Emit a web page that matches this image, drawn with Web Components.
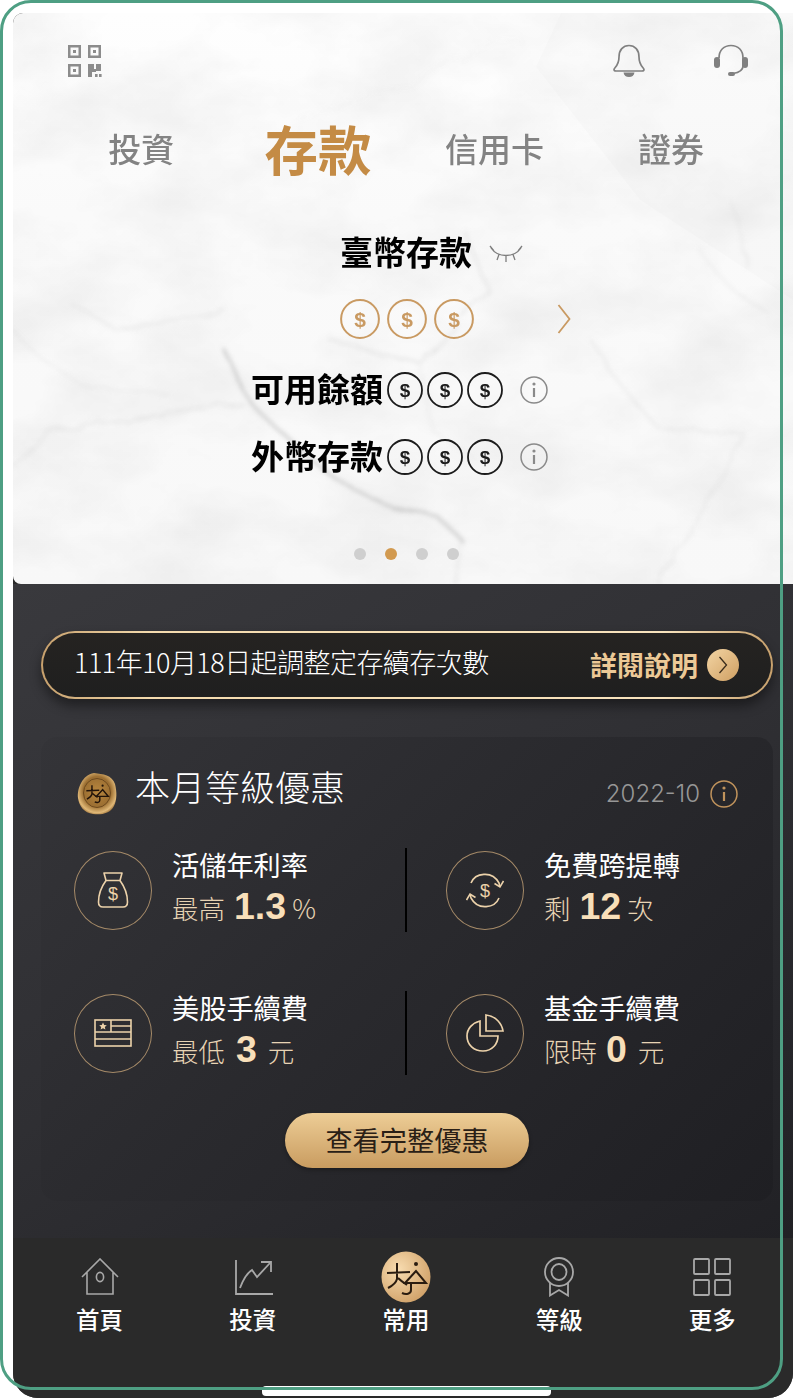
<!DOCTYPE html>
<html lang="zh-Hant">
<head>
<meta charset="utf-8">
<title>存款</title>
<style>
	html, body {
		margin: 0;
		background: #fff;
		font-family: "Noto Sans CJK TC", "Liberation Sans", sans-serif;
	}
</style>
</head>
<body>
<phone-app>
	<hero-panel></hero-panel>
	<perk-section></perk-section>
	<nav-bar></nav-bar>
</phone-app>
<green-frame></green-frame>

<script>
const LOGO_STROKES = `
	<path d="M-19 -4 L4 -5 M-9 -14 V2 C-10 6 -14 9 -18 11 M-8 1 C-5 4 -2 6 1 8" />
	<circle cx="10" cy="-13" r="2" stroke="none" fill="currentColor" />
	<path d="M10 -6 L-1 6 H20 Z M5 6 V13 C5 17 0 18 -4 16" />`;

class GreenFrame extends HTMLElement {
	constructor() {
		super();
		this.attachShadow({ mode: 'open' });
		this.shadowRoot.innerHTML = `
		<style>
			:host {
				position: absolute;
				left: 0;
				top: 0;
				width: 783px;
				height: 1390px;
				box-sizing: border-box;
				border: 3px solid #4e9f83;
				border-radius: 31px;
				pointer-events: none;
				z-index: 5;
			}
		</style>`;
	}
}

class PhoneApp extends HTMLElement {
	constructor() {
		super();
		this.attachShadow({ mode: 'open' });
		this.shadowRoot.innerHTML = `
		<style>
			:host {
				display: flex;
				flex-direction: column;
				position: relative;
				box-sizing: border-box;
				width: 780px;
				height: 1385px;
				margin: 13px 0 0 13px;
				overflow: hidden;
				border-radius: 10px 0 25px 25px;
				background: #2a2a2a;
			}
			#home-bar {
				position: absolute;
				left: 249px;
				top: 1373px;
				width: 289px;
				height: 10px;
				border-radius: 4px;
				background: #fff;
			}
		</style>
		<slot></slot>
		<div id="home-bar"></div>`;
	}
}

class MarbleBg extends HTMLElement {
	constructor() {
		super();
		this.attachShadow({ mode: 'open' });
		this.shadowRoot.innerHTML = `
		<style>
			:host {
				position: absolute;
				inset: 0;
				background: linear-gradient(180deg, #fefefe, #fafafa 35%, #f8f8f8);
			}
			svg { display: block; }
		</style>
		<svg width="780" height="571" viewBox="13 13 780 571">
			<defs>
				<filter id="cloud" x="0" y="0" width="100%" height="100%">
					<feTurbulence type="fractalNoise" baseFrequency="0.009 0.014" numOctaves="5" seed="11" />
					<feColorMatrix values="0 0 0 0 0  0 0 0 0 0  0 0 0 0 0  0.09 0 0 0 -0.032" />
				</filter>
				<filter id="vein" x="-10%" y="-10%" width="120%" height="120%">
					<feTurbulence type="fractalNoise" baseFrequency="0.03" numOctaves="4" seed="4" result="n" />
					<feDisplacementMap in="SourceGraphic" in2="n" scale="14" />
					<feGaussianBlur stdDeviation="2.1" />
				</filter>
			</defs>
			<rect x="13" y="13" width="780" height="571" filter="url(#cloud)" />
			<path d="M561 13 L793 13 L793 300 L640 200 L536 67 L475 197 Z" fill="#000" opacity="0.01" />
			<g filter="url(#vein)" fill="none" stroke="#c4c4c4" stroke-width="2">
				<path d="M222 347 C232 362 238 378 248 400 C262 416 272 424 283 433 C300 450 316 464 334 477 C352 490 368 496 384 503 C404 510 424 514 440 520 C450 528 458 536 465 543" stroke-width="3" stroke="#b8b8b8" opacity=".6" />
				<path d="M10 463 C28 448 44 438 60 430 C90 424 120 420 150 417 C182 412 214 408 243 403" opacity=".3" />
				<path d="M465 230 C470 248 478 268 485 287 C468 312 440 340 420 363 C390 356 358 348 329 340" opacity=".38" />
				<path d="M70 303 C86 312 100 322 116 330 C150 328 190 318 228 313" opacity=".24" />
				<path d="M590 340 C600 352 606 360 607 367 C622 388 640 408 657 427 C690 430 718 432 743 433 C732 456 720 478 708 500 C690 528 672 556 657 584" opacity=".26" />
				<path d="M455 584 C456 560 458 548 460 540" opacity=".3" />
				<path d="M420 363 C424 384 428 404 432 430 M432 430 C446 440 462 450 478 462" opacity=".16" />
				<path d="M13 330 C30 350 52 368 80 384 C110 392 140 388 170 395" opacity=".16" />
				<path d="M700 250 C720 280 740 300 768 312 M730 200 C742 226 750 250 748 272" opacity=".2" />
				<path d="M420 80 C440 60 480 44 520 40 M300 120 C340 104 382 92 420 80" opacity=".08" />
			</g>
		</svg>`;
	}
}

class MaskCoin extends HTMLElement {
	constructor() {
		super();
		this.attachShadow({ mode: 'open' });
		const size = this.getAttribute('size') || 36;
		const tone = this.getAttribute('tone') === 'gold' ? '#c99a62' : '#1c1c1c';
		this.shadowRoot.innerHTML = `
		<style>
			:host { display: block; width: ${size}px; height: ${size}px; }
			svg { display: block; }
			text {
				font-family: "Liberation Sans", sans-serif;
				font-weight: 700;
				font-size: 21px;
				text-anchor: middle;
			}
		</style>
		<svg width="${size}" height="${size}" viewBox="0 0 40 40">
			<circle cx="20" cy="20" r="18.9" fill="none" stroke="${tone}" stroke-width="2" />
			<text x="20" y="27.5" fill="${tone}">$</text>
		</svg>`;
	}
}

class InfoMark extends HTMLElement {
	constructor() {
		super();
		this.attachShadow({ mode: 'open' });
		const tone = this.getAttribute('tone') || '#8a8a8a';
		this.shadowRoot.innerHTML = `
		<style>
			:host { display: block; width: 28px; height: 28px; }
			svg { display: block; }
		</style>
		<svg width="28" height="28" viewBox="0 0 28 28" fill="none" stroke="${tone}" stroke-width="1.5">
			<circle cx="14" cy="14" r="13" />
			<circle cx="14" cy="8" r="1.6" fill="${tone}" stroke="none" />
			<path d="M14 12 V21" stroke-width="2.2" />
		</svg>`;
	}
}

class HeroPanel extends HTMLElement {
	constructor() {
		super();
		this.attachShadow({ mode: 'open' });
		this.shadowRoot.innerHTML = `
		<style>
			:host {
				display: flex;
				flex-direction: column;
				position: relative;
				flex: none;
				box-sizing: border-box;
				height: 571px;
				padding-top: 31px;
				border-radius: 0 0 0 8px;
				overflow: hidden;
				color: #000;
			}
			.layer { position: relative; }
			#tools {
				display: flex;
				align-items: flex-start;
				height: 34px;
				padding: 0 44px 0 54px;
			}
			#tools svg { display: block; }
			#bell { margin-left: auto; }
			#headset { margin-left: 67px; }
			#tabs {
				display: grid;
				grid-template-columns: repeat(4, 176.6px);
				height: 60px;
				margin-top: 40px;
				padding-left: 40px;
				align-items: center;
				justify-items: center;
				color: #838383;
				font-size: 33px;
				font-weight: 500;
				line-height: 60px;
			}
			#tabs b {
				color: #c48b45;
				font-size: 53.5px;
				font-weight: 700;
			}
			.center-row {
				display: grid;
				grid-template-columns: 1fr auto 1fr;
				align-items: center;
				height: 40px;
				padding-left: 6px;
			}
			#title-row { margin-top: 56px; }
			#gold-row { margin-top: 25px; padding-left: 7px; }
			.strong {
				font-size: 33px;
				font-weight: 700;
				line-height: 36px;
				padding-bottom: 4px;
				white-space: nowrap;
			}
			#title-row .strong {
				line-height: 34px;
				padding-bottom: 6px;
			}
			#eye { margin: 1px 0 0 17px; display: block; }
			#chevron { margin-left: 83px; display: block; }
			.coins {
				display: flex;
				gap: 7px;
			}
			.balance {
				display: flex;
				align-items: center;
				justify-content: center;
				height: 40px;
				padding-right: 7px;
			}
			.balance .coins {
				gap: 4px;
				margin-left: 4px;
			}
			.balance info-mark { margin-left: 17px; }
			#avail { margin-top: 31px; }
			#foreign { margin-top: 27px; }
			#dots {
				display: flex;
				justify-content: center;
				gap: 19px;
				margin-top: 71px;
				padding-left: 6px;
			}
			#dots i {
				width: 12px;
				height: 12px;
				border-radius: 50%;
				background: #cfcfcf;
			}
			#dots i.on { background: #d29a50; }
		</style>
		<marble-bg></marble-bg>
		<div class="layer" id="tools">
			<svg width="36" height="34" viewBox="0 0 36 34" fill="#8c8c8c">
				<path fill-rule="evenodd" d="M1 1 H14 V14 H1 Z M3.5 3.5 V11.5 H11.5 V3.5 Z M21 1 H34 V14 H21 Z M23.5 3.5 V11.5 H31.5 V3.5 Z M1 20 H14 V33 H1 Z M3.5 22.5 V30.5 H11.5 V22.5 Z" />
				<rect x="6" y="6" width="3" height="3" /><rect x="26" y="6" width="3" height="3" /><rect x="6" y="25" width="3" height="3" />
				<path d="M21 20 H27 V25 H29 V20 H34 V27 H29 V28 H25 V33 H21 Z" />
				<rect x="28" y="30" width="2.6" height="3" /><rect x="32" y="30" width="2.6" height="3" />
			</svg>
			<svg id="bell" width="34" height="34" viewBox="0 0 34 34" fill="none" stroke="#808080" stroke-width="1.7">
				<path d="M2 25.5 C2 23.5 7 22 7 13 C7 6 11 1.5 17 1.5 C23 1.5 27 6 27 13 C27 22 32 23.5 32 25.5 C32 26.5 31 27 30 27 H4 C3 27 2 26.5 2 25.5 Z" />
				<path d="M11.5 28.5 H22.5 C22 31.5 20 33 17 33 C14 33 12 31.5 11.5 28.5 Z" fill="#808080" stroke="none" />
			</svg>
			<svg id="headset" width="36" height="34" viewBox="0 0 36 34" fill="none" stroke="#808080" stroke-width="1.7">
				<path d="M6 14 C6 6 11 1.5 18 1.5 C25 1.5 30 6 30 14 V22 C30 27 26 28.5 20 29.5" />
				<rect x="1" y="13" width="6" height="11" rx="3" fill="#808080" stroke="none" />
				<rect x="29" y="13" width="6" height="11" rx="3" fill="#808080" stroke="none" />
				<rect x="15" y="28" width="7" height="4" rx="2" fill="#808080" stroke="none" />
			</svg>
		</div>
		<div class="layer" id="tabs">
			<span>投資</span><b>存款</b><span>信用卡</span><span>證券</span>
		</div>
		<div class="layer center-row" id="title-row">
			<span></span>
			<span class="strong">臺幣存款</span>
			<svg id="eye" width="34" height="20" viewBox="0 0 34 20" fill="none" stroke="#7d7d7d" stroke-width="1.3">
				<path d="M2 3 C9 13 25 13 32 3 M1 1 L5 6 M33 1 L29 6 M10 9.5 L8 15 M24 9.5 L26 15 M17 11 V17" />
			</svg>
		</div>
		<div class="layer center-row" id="gold-row">
			<span></span>
			<div class="coins">
				<mask-coin tone="gold" size="40"></mask-coin>
				<mask-coin tone="gold" size="40"></mask-coin>
				<mask-coin tone="gold" size="40"></mask-coin>
			</div>
			<svg id="chevron" width="14" height="30" viewBox="0 0 14 30" fill="none" stroke="#c99a62" stroke-width="1.8">
				<path d="M1.5 1 L12.5 15 L1.5 29" />
			</svg>
		</div>
		<div class="layer balance" id="avail">
			<span class="strong">可用餘額</span>
			<div class="coins">
				<mask-coin size="36"></mask-coin>
				<mask-coin size="36"></mask-coin>
				<mask-coin size="36"></mask-coin>
			</div>
			<info-mark></info-mark>
		</div>
		<div class="layer balance" id="foreign">
			<span class="strong">外幣存款</span>
			<div class="coins">
				<mask-coin size="36"></mask-coin>
				<mask-coin size="36"></mask-coin>
				<mask-coin size="36"></mask-coin>
			</div>
			<info-mark></info-mark>
		</div>
		<div class="layer" id="dots">
			<i></i><i class="on"></i><i></i><i></i>
		</div>`;
	}
}

class NoticeBanner extends HTMLElement {
	constructor() {
		super();
		this.attachShadow({ mode: 'open' });
		this.shadowRoot.innerHTML = `
		<style>
			:host {
				display: flex;
				align-items: center;
				box-sizing: border-box;
				width: 732px;
				height: 68px;
				padding: 0 32px 0 32px;
				border: 2px solid transparent;
				border-radius: 34px;
				background:
					linear-gradient(180deg, #252321, #1f1f1f) padding-box,
					linear-gradient(90deg, #c7a06c, #f4dbae 15%, #f8e3bd 85%, #c7a06c) border-box;
				box-shadow: 0 7px 12px rgba(0, 0, 0, .42);
				color: #fff;
			}
			#msg {
				padding-bottom: 7px;
				font-size: 27px;
				font-weight: 300;
				line-height: 36px;
				letter-spacing: -0.55px;
				white-space: nowrap;
				margin-left: -1px;
			}
			#more {
				margin-left: auto;
				color: #ecc996;
				font-size: 27px;
				font-weight: 700;
				line-height: 40px;
			}
			svg { display: block; margin-left: 9px; }
		</style>
		<span id="msg">111年10月18日起調整定存續存次數</span>
		<span id="more">詳閱說明</span>
		<svg width="32" height="32" viewBox="0 0 32 32">
			<defs>
				<linearGradient id="disc" x1="0" y1="0" x2="1" y2="1">
					<stop offset="0" stop-color="#f3d5a4" /><stop offset="1" stop-color="#cf9f62" />
				</linearGradient>
			</defs>
			<circle cx="16" cy="16" r="16" fill="url(#disc)" />
			<path d="M12.5 8 L19.5 16 L12.5 24" fill="none" stroke="#3a2c1c" stroke-width="1.3" />
		</svg>`;
	}
}

class PerkItem extends HTMLElement {
	constructor() {
		super();
		this.attachShadow({ mode: 'open' });
		this.shadowRoot.innerHTML = `
		<style>
			:host {
				display: flex;
				align-items: center;
				height: 84px;
			}
			:host([divided]) {
				border-left: 2px solid #000;
				padding-left: 39px;
				margin-left: -1px;
			}
			#ring {
				flex: none;
				box-sizing: border-box;
				width: 78px;
				height: 79px;
				border: 1px solid #a58a68;
				border-radius: 50%;
				display: flex;
				align-items: center;
				justify-content: center;
			}
			#copy { margin-left: 20px; margin-top: -1px; }
			#title {
				color: #fff;
				font-size: 27.2px;
				font-weight: 400;
				line-height: 34px;
				white-space: nowrap;
			}
			#value {
				display: flex;
				align-items: baseline;
				gap: 7px;
				color: #e8d4b4;
				font-size: 26.5px;
				font-weight: 300;
				line-height: 50px;
				white-space: nowrap;
			}
		</style>
		<div id="ring"><slot name="icon"></slot></div>
		<div id="copy">
			<div id="title"><slot name="title"></slot></div>
			<div id="value"><slot name="pre"></slot><slot name="num"></slot><slot name="unit"></slot></div>
		</div>`;
	}
}

class PerkCard extends HTMLElement {
	constructor() {
		super();
		this.attachShadow({ mode: 'open' });
		this.shadowRoot.innerHTML = `
		<style>
			:host {
				display: block;
				box-sizing: border-box;
				width: 732px;
				height: 464px;
				margin-top: 38px;
				padding: 36px 0 33px 33px;
				border-radius: 16px;
				background: linear-gradient(135deg, #343438, #2a2a2e 45%, #1f1f23);
			}
			#head {
				display: flex;
				align-items: center;
				height: 42px;
				padding: 0 35px 0 3px;
			}
			#head svg { display: block; }
			#head h2 {
				margin: -17px 0 0 18px;
				color: #fff;
				font-size: 35px;
				font-weight: 300;
				line-height: 44px;
			}
			#date {
				margin-left: auto;
				color: #979797;
				font-family: Inter, "Liberation Sans", sans-serif;
				font-size: 24px;
				font-weight: 300;
				line-height: 30px;
			}
			info-mark { margin: 0 0 0 10px; }
			#grid {
				display: grid;
				grid-template-columns: 332px 1fr;
				row-gap: 59px;
				margin-top: 33px;
			}
			#cta {
				display: block;
				box-sizing: border-box;
				width: 244px;
				height: 55px;
				margin: 38px 0 0 211px;
				padding: 0 0 4px;
				border: 0;
				border-radius: 28px;
				background: linear-gradient(180deg, #edcd96, #c99c60);
				box-shadow: 0 2px 4px rgba(0, 0, 0, .3);
				color: #2a2016;
				font: 400 27.2px/46px "Noto Sans CJK TC", sans-serif;
			}
		</style>
		<div id="head">
			<svg width="40" height="42" viewBox="-20 -21 40 42" color="#22140a">
				<defs>
					<radialGradient id="wax" cx="0.5" cy="0.45" r="0.6">
						<stop offset="0" stop-color="#b8873f" /><stop offset="0.6" stop-color="#9c6f32" /><stop offset="0.85" stop-color="#e0b877" /><stop offset="1" stop-color="#8a5f2a" />
					</radialGradient>
				</defs>
				<path d="M-3 -21 C6 -20 15 -19 18 -10 C20 -2 20 6 17 12 C13 20 4 21 -4 20 C-13 19 -18 12 -19 4 C-20 -5 -15 -19 -3 -21 Z" fill="url(#wax)" />
				<ellipse cx="0" cy="-1" rx="13.5" ry="14.5" fill="none" stroke="#6e4a1e" stroke-width="1" />
				<g transform="translate(0 -1) scale(.56)" fill="none" stroke="currentColor" stroke-width="2.6">${LOGO_STROKES}</g>
			</svg>
			<h2>本月等級優惠</h2>
			<span id="date">2022-10</span>
			<info-mark tone="#c0935c"></info-mark>
		</div>
		<div id="grid"><slot></slot></div>
		<button id="cta">查看完整優惠</button>`;
	}
}

class PerkSection extends HTMLElement {
	constructor() {
		super();
		this.attachShadow({ mode: 'open' });
		this.shadowRoot.innerHTML = `
		<style>
			:host {
				display: block;
				flex: none;
				box-sizing: border-box;
				height: 654px;
				padding: 47px 0 0 28px;
				background: linear-gradient(150deg, #39393d, #2f2f33 50%, #212125);
			}
			svg { display: block; }
			svg text {
				fill: #ecd2aa;
				font-family: "Liberation Sans", sans-serif;
				text-anchor: middle;
			}
			.num {
				margin: 0 -1px 0 2px;
				color: #f8dfb9;
				font-family: "Liberation Sans", sans-serif;
				font-size: 37.5px;
				font-weight: 700;
			}
			.single { margin-left: 4px; }
			.yuan { margin-left: 5px; }
		</style>
		<notice-banner></notice-banner>
		<perk-card>
			<perk-item>
				<svg slot="icon" width="32" height="36" viewBox="0 0 32 36" fill="none" stroke="#ecd2aa" stroke-width="1.6" stroke-linejoin="round">
					<path d="M7 1 H25 L23 8.5 H9 Z" />
					<path d="M9 8.5 C5 14 1.5 22 1.5 30 C1.5 33.5 3.5 35 6 35 H26 C28.5 35 30.5 33.5 30.5 30 C30.5 22 27 14 23 8.5" />
					<text x="16" y="28" font-size="18" stroke="none">$</text>
				</svg>
				<span slot="title">活儲年利率</span>
				<span slot="pre">最高</span>
				<span slot="num" class="num">1.3</span>
				<span slot="unit">%</span>
			</perk-item>
			<perk-item divided>
				<svg slot="icon" width="38" height="37" viewBox="0 0 38 37" fill="none" stroke="#ecd2aa" stroke-width="1.6">
					<path d="M5 11 C9 1 26 -2 33 11 L34 15" />
					<path d="M37.5 9 L34 15 L28.5 11.5" />
					<path d="M33 26 C29 36 12 39 5 26 L4 22" />
					<path d="M0.5 28 L4 22 L9.5 25.5" />
					<text x="19" y="25" font-size="18" stroke="none">$</text>
				</svg>
				<span slot="title">免費跨提轉</span>
				<span slot="pre">剩</span>
				<span slot="num" class="num">12</span>
				<span slot="unit">次</span>
			</perk-item>
			<perk-item>
				<svg slot="icon" width="38" height="28" viewBox="0 0 38 28" fill="none" stroke="#ecd2aa" stroke-width="1.6">
					<rect x="1" y="1" width="36" height="26" />
					<path d="M17 1 V13 M17 7 H37 M1 13 H37 M1 20 H37" />
					<path d="M9 3.5 L10.2 6 L12.8 6.3 L10.8 8 L11.4 10.6 L9 9.2 L6.6 10.6 L7.2 8 L5.2 6.3 L7.8 6 Z" fill="#ecd2aa" stroke="none" />
				</svg>
				<span slot="title">美股手續費</span>
				<span slot="pre">最低</span>
				<span slot="num" class="num single">3</span>
				<span slot="unit" class="yuan">元</span>
			</perk-item>
			<perk-item divided>
				<svg slot="icon" width="38" height="38" viewBox="0 0 38 38" fill="none" stroke="#ecd2aa" stroke-width="1.7">
					<path d="M20 1 C30 2 36 10 37 17 H20 Z" />
					<path d="M14 7 C6 9 1 15 1 22 C1 31 8 37 17 37 C26 37 32 30 32 22 H14 Z" />
				</svg>
				<span slot="title">基金手續費</span>
				<span slot="pre">限時</span>
				<span slot="num" class="num">0</span>
				<span slot="unit" class="yuan">元</span>
			</perk-item>
		</perk-card>`;
	}
}

class NavItem extends HTMLElement {
	constructor() {
		super();
		this.attachShadow({ mode: 'open' });
		this.shadowRoot.innerHTML = `
		<style>
			:host {
				display: flex;
				flex-direction: column;
				align-items: center;
			}
			#icon {
				display: flex;
				align-items: center;
				justify-content: center;
				height: 42px;
			}
			#label {
				margin-top: 6px;
				color: #fff;
				font-size: 23.5px;
				font-weight: 500;
				line-height: 30px;
			}
		</style>
		<div id="icon"><slot name="icon"></slot></div>
		<div id="label"><slot></slot></div>`;
	}
}

class NavBar extends HTMLElement {
	constructor() {
		super();
		this.attachShadow({ mode: 'open' });
		this.shadowRoot.innerHTML = `
		<style>
			:host {
				display: grid;
				grid-template-columns: repeat(5, 153.2px);
				flex: 1;
				box-sizing: border-box;
				align-items: start;
				padding: 18px 0 0 10px;
				background: #2a2a2a;
			}
			svg { display: block; }
		</style>
		<nav-item>
			<svg slot="icon" width="38" height="38" viewBox="0 0 38 38" fill="none" stroke="#a8a8a8" stroke-width="1.6">
				<path d="M1 19 L19 1 L37 19 M6 14 V36 H32 V14" />
				<ellipse cx="19" cy="19" rx="3.6" ry="4.6" />
			</svg>
			首頁
		</nav-item>
		<nav-item>
			<svg slot="icon" width="38" height="36" viewBox="0 0 38 36" fill="none" stroke="#a8a8a8" stroke-width="1.8" style="margin-left: 3px">
				<path d="M1 1 V35 H38" />
				<path d="M5 29 C8 21 12 14 17 11 L22 18 L35 4" />
				<path d="M26 3 H36 V13" />
			</svg>
			投資
		</nav-item>
		<nav-item>
			<svg slot="icon" width="50" height="52" viewBox="-25 -26 50 52" color="#2a1c10">
				<defs>
					<radialGradient id="badge" cx="0.35" cy="0.35" r="0.85">
						<stop offset="0" stop-color="#f8dcb0" /><stop offset="1" stop-color="#c9975c" />
					</radialGradient>
				</defs>
				<ellipse cx="0" cy="0" rx="24.5" ry="25.5" fill="url(#badge)" />
				<g fill="none" stroke="currentColor" stroke-width="2">${LOGO_STROKES}</g>
			</svg>
			常用
		</nav-item>
		<nav-item>
			<svg slot="icon" width="30" height="40" viewBox="0 0 30 40" fill="none" stroke="#a8a8a8" stroke-width="1.8">
				<ellipse cx="15" cy="15" rx="14" ry="14" />
				<ellipse cx="15" cy="15" rx="7.5" ry="8" />
				<path d="M6 26 V38.5 L15 33 L24 38.5 V26" />
			</svg>
			等級
		</nav-item>
		<nav-item>
			<svg slot="icon" width="38" height="38" viewBox="0 0 38 38" fill="none" stroke="#a8a8a8" stroke-width="1.8">
				<rect x="1" y="1" width="15" height="15" rx="1" />
				<rect x="22" y="1" width="15" height="15" rx="1" />
				<rect x="1" y="22" width="15" height="15" rx="1" />
				<rect x="22" y="22" width="15" height="15" rx="1" />
			</svg>
			更多
		</nav-item>`;
	}
}

customElements.define('green-frame', GreenFrame);
customElements.define('phone-app', PhoneApp);
customElements.define('marble-bg', MarbleBg);
customElements.define('mask-coin', MaskCoin);
customElements.define('info-mark', InfoMark);
customElements.define('hero-panel', HeroPanel);
customElements.define('notice-banner', NoticeBanner);
customElements.define('perk-item', PerkItem);
customElements.define('perk-card', PerkCard);
customElements.define('perk-section', PerkSection);
customElements.define('nav-item', NavItem);
customElements.define('nav-bar', NavBar);
</script>
</body>
</html>
